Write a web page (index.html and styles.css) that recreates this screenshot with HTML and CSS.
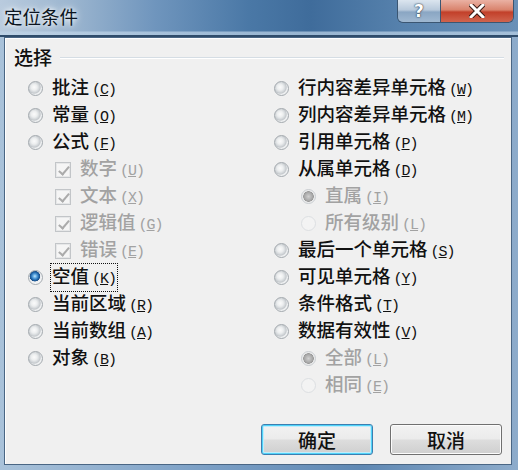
FILE: index.html
```html
<!DOCTYPE html>
<html lang="zh-CN">
<head>
  <meta charset="UTF-8" />
  <title>定位条件</title>
  <link rel="stylesheet" href="styles.css">
</head>
<body>
  <div class="window">
    <div class="titlebar">
      <span class="title">定位条件</span>
      <div class="caption-btns">
        <span class="cap-btn help">?</span>
        <span class="cap-btn close">
          <svg width="16" height="14" viewBox="0 0 16 14">
            <path d="M2 1 L14 13 M14 1 L2 13" stroke="#3a1a14" stroke-width="5" stroke-linecap="square"/>
            <path d="M2 1 L14 13 M14 1 L2 13" stroke="#fff" stroke-width="3" stroke-linecap="square"/>
          </svg>
        </span>
      </div>
    </div>

    <div class="client">
      <div class="group-head"><span>选择</span></div>

      <div class="options">
        <div class="col col-left">
          <div class="opt"><span class="radio"></span><span class="text">批注<span class="key">(<u>C</u>)</span></span></div>
          <div class="opt"><span class="radio"></span><span class="text">常量<span class="key">(<u>O</u>)</span></span></div>
          <div class="opt"><span class="radio"></span><span class="text">公式<span class="key">(<u>F</u>)</span></span></div>
          <div class="opt sub disabled"><span class="check"></span><span class="text">数字<span class="key">(<u>U</u>)</span></span></div>
          <div class="opt sub disabled"><span class="check"></span><span class="text">文本<span class="key">(<u>X</u>)</span></span></div>
          <div class="opt sub disabled"><span class="check"></span><span class="text">逻辑值<span class="key">(<u>G</u>)</span></span></div>
          <div class="opt sub disabled"><span class="check"></span><span class="text">错误<span class="key">(<u>E</u>)</span></span></div>
          <div class="opt"><span class="radio on"></span><span class="text focus">空值<span class="key">(<u>K</u>)</span></span></div>
          <div class="opt"><span class="radio"></span><span class="text">当前区域<span class="key">(<u>R</u>)</span></span></div>
          <div class="opt"><span class="radio"></span><span class="text">当前数组<span class="key">(<u>A</u>)</span></span></div>
          <div class="opt"><span class="radio"></span><span class="text">对象<span class="key">(<u>B</u>)</span></span></div>
        </div>

        <div class="col col-right">
          <div class="opt"><span class="radio"></span><span class="text">行内容差异单元格<span class="key">(<u>W</u>)</span></span></div>
          <div class="opt"><span class="radio"></span><span class="text">列内容差异单元格<span class="key">(<u>M</u>)</span></span></div>
          <div class="opt"><span class="radio"></span><span class="text">引用单元格<span class="key">(<u>P</u>)</span></span></div>
          <div class="opt"><span class="radio"></span><span class="text">从属单元格<span class="key">(<u>D</u>)</span></span></div>
          <div class="opt sub disabled"><span class="radio on"></span><span class="text">直属<span class="key">(<u>I</u>)</span></span></div>
          <div class="opt sub disabled"><span class="radio faint"></span><span class="text">所有级别<span class="key">(<u>L</u>)</span></span></div>
          <div class="opt"><span class="radio"></span><span class="text">最后一个单元格<span class="key">(<u>S</u>)</span></span></div>
          <div class="opt"><span class="radio"></span><span class="text">可见单元格<span class="key">(<u>Y</u>)</span></span></div>
          <div class="opt"><span class="radio"></span><span class="text">条件格式<span class="key">(<u>T</u>)</span></span></div>
          <div class="opt"><span class="radio"></span><span class="text">数据有效性<span class="key">(<u>V</u>)</span></span></div>
          <div class="opt sub disabled"><span class="radio on"></span><span class="text">全部<span class="key">(<u>L</u>)</span></span></div>
          <div class="opt sub disabled"><span class="radio faint"></span><span class="text">相同<span class="key">(<u>E</u>)</span></span></div>
        </div>
      </div>

      <div class="buttons">
        <button class="btn default">确定</button>
        <button class="btn">取消</button>
      </div>
    </div>
  </div>
</body>
</html>
```

FILE: styles.css
```css
* {
  margin: 0;
  padding: 0;
  box-sizing: border-box;
}

body {
  width: 518px;
  height: 470px;
  overflow: hidden;
  font-family: 'Noto Sans CJK SC', 'Noto Sans', sans-serif;
  font-weight: 500;
  color: #111;
}

.window {
  width: 518px;
  height: 470px;
  display: flex;
  flex-direction: column;
  background: linear-gradient(to right, #a9c2da 0%, #7b9fc5 40%, #5f88b3 70%, #8eaccb 100%);
}

/* Title bar */
.titlebar {
  height: 37px;
  display: flex;
  justify-content: space-between;
  align-items: flex-start;
  padding-left: 4px;
  background:
    linear-gradient(to bottom, rgba(255,255,255,0) 0, rgba(255,255,255,0) 31px, rgba(190,212,232,0.7) 32px, rgba(190,212,232,0.7) 35px, #2f4c6b 35px),
    linear-gradient(to right, #b9cbde 0%, #9bb5cf 14%, #6f95bd 30%, #4a78a6 48%, #3f6c9b 60%, #5782ad 78%, #6a90b7 100%);
}

.title {
  font-size: 18.5px;
  font-weight: 400;
  line-height: 24px;
  margin-top: 4px;
  color: #0b1420;
  text-shadow: 0 0 8px #fff, 0 0 4px rgba(255,255,255,0.9);
}

.caption-btns {
  display: flex;
  height: 23px;
  margin-right: 4px;
  border: 1px solid #3b5672;
  border-top: none;
  border-radius: 0 0 6px 6px;
  overflow: hidden;
}

.cap-btn {
  height: 22px;
  display: flex;
  align-items: center;
  justify-content: center;
}

.help {
  width: 43px;
  border-right: 1px solid #3b5672;
  background: linear-gradient(to bottom, #dbe5ef 0%, #b8c9db 45%, #8aa6c3 55%, #9fb8d1 100%);
  color: #fff;
  font: bold 17px 'DejaVu Sans', sans-serif;
  text-shadow: 0 0 2px #23364b, 0 0 1px #23364b;
}

.close {
  width: 72px;
  background: linear-gradient(to bottom, #eab1a3 0%, #d9836d 45%, #c2402a 55%, #d0644e 100%);
}

/* Client area */
.client {
  flex: 1;
  margin: 0 6px 5px 4px;
  background: #f0f0f0;
  border: 1px solid #4a6684;
  box-shadow: inset 1px 1px 0 #fff;
  display: flex;
  flex-direction: column;
  padding: 0 7px 9px 0;
}

.group-head {
  display: flex;
  align-items: center;
  margin-top: 8px;
  padding-left: 9px;
  font-size: 19px;
  line-height: 22px;
}

.group-head::after {
  content: "";
  flex: 1;
  margin-left: 8px;
  margin-top: 1px;
  border-top: 1px solid #d5dde4;
  border-bottom: 1px solid #fff;
}

.options {
  display: flex;
  margin-top: 7px;
  padding-left: 23px;
}

.col-left {
  width: 246px;
}

.opt {
  height: 27px;
  display: flex;
  align-items: center;
  font-size: 18.5px;
  line-height: 22px;
  white-space: nowrap;
}

.opt.sub {
  padding-left: 27px;
}

.text {
  margin-left: 7px;
  padding: 0 1px;
  border: 1px dotted transparent;
}

.text.focus {
  border-color: #111;
}

.key {
  font-family: 'Liberation Mono', monospace;
  font-weight: normal;
  font-size: 15px;
  letter-spacing: -1px;
  margin-left: 3px;
}

.disabled .text {
  color: #a2a2a2;
}

/* Radio buttons */
.radio {
  width: 15px;
  height: 15px;
  flex: none;
  border-radius: 50%;
  border: 1px solid #a3a9ae;
  background: radial-gradient(circle at 40% 40%, #fbfbfb 0, #eceeef 3px, #d3d7da 5px, #c4c8cc 6px, #eef0f1 7px);
}

.radio.on {
  background: radial-gradient(circle at 45% 40%, #c4e6fb 0, #5aa5df 2px, #1f64a8 4px, #1b4f86 5px, #e8ebee 5.5px, #f5f6f7 7px);
}

.disabled .radio {
  border-color: #c9cdd1;
  background: radial-gradient(circle, #f4f4f4 0, #e9eaeb 4px, #e0e2e4 6px, #f4f4f4 7px);
}

.disabled .radio.on {
  background: radial-gradient(circle, #d0d0d0 0, #a9a9a9 4px, #9a9a9a 5px, #e6e7e8 5.5px, #f4f4f4 7px);
}

.disabled .radio.faint {
  border-color: #dcdfe2;
  background: #f3f3f3;
}

/* Checkboxes */
.check {
  width: 16px;
  height: 16px;
  flex: none;
  position: relative;
  border: 1px solid #c2c5c8;
  background: #f5f5f5;
  box-shadow: inset 0 0 0 1px #e6e7e8;
}

.check::after {
  content: "";
  position: absolute;
  left: 5px;
  top: 1px;
  width: 4px;
  height: 9px;
  border-right: 2px solid #ababab;
  border-bottom: 2px solid #ababab;
  transform: rotate(40deg);
}

/* Dialog buttons */
.buttons {
  margin-top: auto;
  display: flex;
  justify-content: flex-end;
  gap: 17px;
  padding-right: 2px;
}

.btn {
  width: 112px;
  height: 31px;
  border: 1px solid #707070;
  border-radius: 3px;
  background: linear-gradient(to bottom, #f2f2f2 0%, #ebebeb 48%, #dddddd 52%, #cfcfcf 100%);
  box-shadow: inset 0 0 0 1px #fcfcfc;
  font-family: 'Noto Sans CJK SC', sans-serif;
  font-weight: 500;
  font-size: 19px;
  line-height: 27px;
  color: #111;
}

.btn.default {
  border-color: #3c7fb1;
  box-shadow: inset 0 0 0 1px #4fd3f9, inset 0 0 0 2px #c0ecfb;
}
```
